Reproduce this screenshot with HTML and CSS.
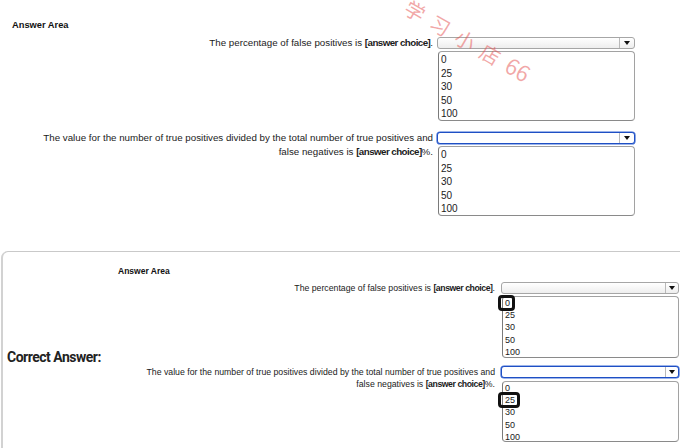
FILE: index.html
```html
<!DOCTYPE html>
<html lang="en">
<head>
<meta charset="utf-8">
<title>Answer Area</title>
<link rel="stylesheet" href="styles.css">
</head>
<body>
<section class="area">
  <h2 class="area-title">Answer Area</h2>
  <div class="qa qa-top">
    <p class="q">The percentage of false positives is <b>[answer choice]</b>.</p>
    <div class="pick">
      <div class="select"><span class="arrow"></span></div>
      <ul class="list">
        <li>0</li><li>25</li><li>30</li><li>50</li><li>100</li>
      </ul>
    </div>
    <p class="q q-two">The value for the number of true positives divided by the total number of true positives and<br>false negatives is <b>[answer choice]</b>%.</p>
    <div class="pick">
      <div class="select focus"><span class="arrow"></span></div>
      <ul class="list">
        <li>0</li><li>25</li><li>30</li><li>50</li><li>100</li>
      </ul>
    </div>
  </div>
</section>

<section class="panel">
  <h2 class="panel-title">Answer Area</h2>
  <div class="panel-body">
    <div class="correct">Correct Answer:</div>
    <div class="qa qa-bot">
      <p class="q">The percentage of false positives is <b>[answer choice]</b>.</p>
      <div class="pick">
        <div class="select"><span class="arrow"></span></div>
        <ul class="list">
          <li><span class="mark">0</span></li><li>25</li><li>30</li><li>50</li><li>100</li>
        </ul>
      </div>
      <p class="q">The value for the number of true positives divided by the total number of true positives and<br>false negatives is <b>[answer choice]</b>%.</p>
      <div class="pick pick-two">
        <div class="select focus"><span class="arrow"></span></div>
        <ul class="list">
          <li>0</li><li><span class="mark">25</span></li><li>30</li><li>50</li><li>100</li>
        </ul>
      </div>
    </div>
  </div>
</section>

<div class="watermark">学习小店<span class="num">66</span></div>
</body>
</html>
```

FILE: styles.css
```css
* { box-sizing: border-box; }

html, body {
  margin: 0;
  padding: 0;
  background: #ffffff;
}

body {
  width: 680px;
  height: 448px;
  overflow: hidden;
  position: relative;
  font-family: "Liberation Sans", Arial, sans-serif;
  color: #1b1b1b;
}

p, ul, h2 { margin: 0; padding: 0; }

b {
  font-weight: 700;
  letter-spacing: -0.55px;
}

/* ---------- top section ---------- */
.area {
  padding: 19px 0 0 12px;
}

.area-title {
  font-size: 9.3px;
  line-height: 12px;
  font-weight: 700;
  color: #111;
}

.qa {
  display: grid;
  align-items: start;
}

.qa-top {
  margin-top: 6px;
  grid-template-columns: 421px 198px;
  column-gap: 4px;
  row-gap: 11px;
}

.q {
  text-align: right;
  white-space: nowrap;
}

.qa-top .q {
  font-size: 9.75px;
  line-height: 12px;
}

.qa-top .q-two {
  line-height: 13.5px;
  margin-top: -1px;
}

.select {
  height: 12px;
  border: 1px solid #a6a6a6;
  border-radius: 3px;
  background: linear-gradient(#ffffff, #eeeeee);
  display: flex;
  justify-content: flex-end;
}

.select.focus {
  border: 1px solid #1f4fc4;
  box-shadow: 0 0 0 0.6px #3b6ad6;
  background: #ffffff;
}

.arrow {
  width: 15px;
  border-left: 1px solid #b9b9b9;
  display: flex;
  align-items: center;
  justify-content: center;
}

.arrow::after {
  content: "";
  border-top: 4px solid #111;
  border-left: 3.5px solid transparent;
  border-right: 3.5px solid transparent;
}

.list {
  list-style: none;
  margin-top: 2px;
  border: 1px solid #a2a2a2;
  border-left-color: #7a7a7a;
  border-bottom-color: #8a8a8a;
  border-radius: 4px;
  background: #fff;
  padding: 1px 0 0 2px;
}

.qa-top .list {
  margin-left: 1px;
  height: 70px;
  font-size: 10px;
  line-height: 13.5px;
}

/* ---------- bottom panel ---------- */
.panel {
  margin-top: 35px;
  margin-left: 1px;
  border-top: 1px solid #c9c9c9;
  border-left: 2px solid #d2d2d2;
  border-top-left-radius: 7px;
  padding-top: 14px;
  height: 197px;
}

.panel-title {
  margin-left: 115px;
  font-size: 8.5px;
  line-height: 11px;
  font-weight: 700;
  color: #111;
}

.panel-body {
  display: flex;
  margin-top: 5px;
}

.correct {
  width: 115px;
  flex: none;
  padding: 66px 0 0 4px;
  font-family: "Roboto", "Liberation Sans", sans-serif;
  font-weight: 700;
  font-size: 14px;
  letter-spacing: -0.5px;
  line-height: 18px;
  color: #222;
  white-space: nowrap;
}

.qa-bot {
  grid-template-columns: 377px 178px;
  column-gap: 6px;
  row-gap: 8px;
}

.qa-bot .q {
  font-size: 8.73px;
  line-height: 12px;
}

.qa-bot b {
  letter-spacing: -0.45px;
}

.qa-bot .list {
  margin-left: 1px;
  height: 62px;
  font-size: 9px;
  line-height: 12.2px;
  padding: 0 0 0 2px;
}

.qa-bot .pick-two .list {
  margin-top: 3px;
  height: 61px;
}

.qa-bot .arrow {
  width: 13px;
}

.mark {
  position: relative;
  display: inline-block;
}

.mark::before {
  content: "";
  position: absolute;
  top: -2px;
  bottom: -2px;
  left: -7px;
  right: -5px;
  border: 3px solid #111;
  border-radius: 4px;
}

/* ---------- watermark ---------- */
.watermark {
  position: absolute;
  left: 407px;
  top: -6px;
  line-height: 20px;
  font-family: "Noto Sans CJK SC", sans-serif;
  font-weight: 400;
  font-size: 20px;
  letter-spacing: 9px;
  color: rgba(228, 80, 80, 0.5);
  transform: rotate(30deg);
  transform-origin: 0 50%;
  white-space: nowrap;
  pointer-events: none;
}

.watermark .num {
  font-size: 22px;
  letter-spacing: 0;
}
```
